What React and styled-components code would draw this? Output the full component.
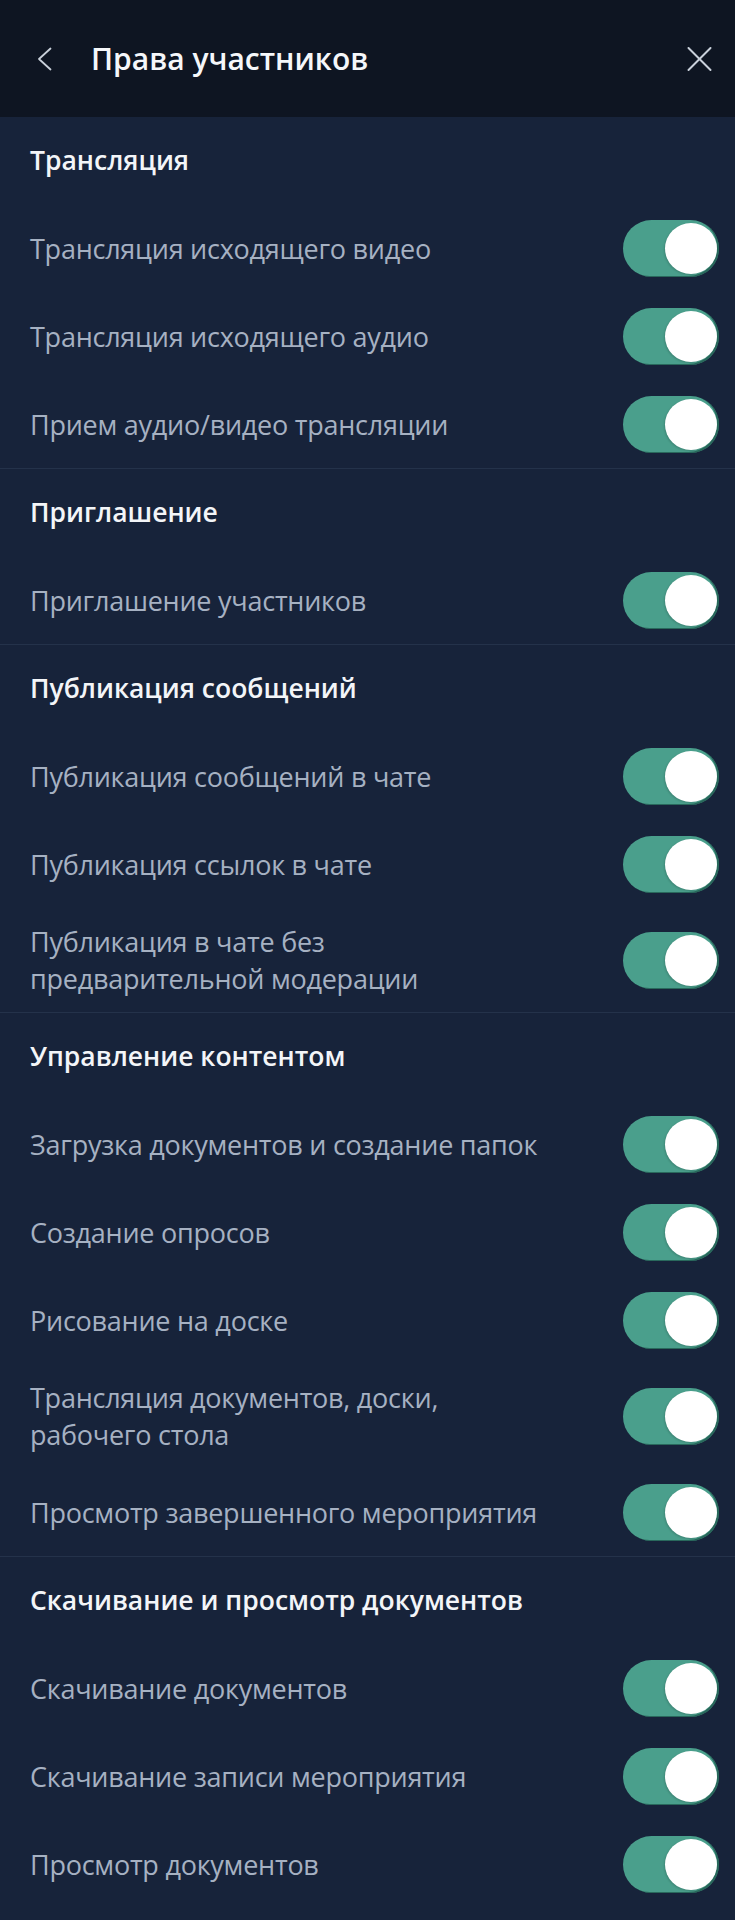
import React from "react";
import styled, { createGlobalStyle } from "styled-components";

const Global = createGlobalStyle`
  html, body { margin: 0; padding: 0; background: #17233a; }
  body { font-family: "Open Sans", "Noto Sans", sans-serif; -webkit-font-smoothing: antialiased; }
  * { box-sizing: border-box; }
`;

const Page = styled.div`
  width: 735px;
  min-height: 1920px;
  background: #17233a;
  display: flex;
  flex-direction: column;
`;

const Header = styled.header`
  height: 117px;
  background: #0e1522;
  display: flex;
  align-items: center;
  padding: 0 23px 0 37px;
`;

const IconButton = styled.button`
  background: none;
  border: none;
  padding: 0;
  display: flex;
  align-items: center;
  justify-content: center;
  cursor: pointer;
`;

const Title = styled.h1`
  flex: 1;
  margin: 0 0 0 39px;
  font-size: 30px;
  font-weight: 600;
  color: #f5f7fa;
  line-height: 1.2;
`;

const Section = styled.section`
  border-bottom: 1px solid ${(p) => (p.$last ? "transparent" : "#24324a")};
  display: flex;
  flex-direction: column;
`;

const SectionTitle = styled.h2`
  height: 87px;
  margin: 0;
  padding: 0 16px 2px 30px;
  display: flex;
  align-items: center;
  font-size: 26.5px;
  font-weight: 600;
  color: #f3f5f8;
`;

const Row = styled.div`
  min-height: ${(p) => (p.$tall ? 104 : 88)}px;
  padding: 14px 16px 14px 30px;
  display: flex;
  align-items: center;
  justify-content: space-between;
  gap: 20px;
`;

const Label = styled.span`
  max-width: 540px;
  font-size: 27px;
  line-height: 37px;
  letter-spacing: -0.25px;
  font-weight: 400;
  color: #a6b1c2;
`;

const Track = styled.span`
  position: relative;
  flex: none;
  width: 96px;
  height: 57px;
  border-radius: 29px;
  background: ${(p) => (p.$on ? "#4a9f8c" : "#3a465a")};
  box-shadow: inset -2px -1px 0 rgba(20, 70, 60, 0.6);
`;

const Knob = styled.span`
  position: absolute;
  top: 3px;
  ${(p) => (p.$on ? "right: 2px;" : "left: 2px;")}
  width: 52px;
  height: 51px;
  border-radius: 50%;
  background: #ffffff;
  box-shadow: -1px 1px 2px rgba(0, 0, 0, 0.15);
`;

const Toggle = ({ on = true }) => (
  <Track $on={on} role="switch" aria-checked={on}>
    <Knob $on={on} />
  </Track>
);

const sections = [
  {
    title: "Трансляция",
    items: [
      ["Трансляция исходящего видео"],
      ["Трансляция исходящего аудио"],
      ["Прием аудио/видео трансляции"],
    ],
  },
  { title: "Приглашение", items: [["Приглашение участников"]] },
  {
    title: "Публикация сообщений",
    items: [
      ["Публикация сообщений в чате"],
      ["Публикация ссылок в чате"],
      ["Публикация в чате без", "предварительной модерации"],
    ],
  },
  {
    title: "Управление контентом",
    items: [
      ["Загрузка документов и создание папок"],
      ["Создание опросов"],
      ["Рисование на доске"],
      ["Трансляция документов, доски,", "рабочего стола"],
      ["Просмотр завершенного мероприятия"],
    ],
  },
  {
    title: "Скачивание и просмотр документов",
    items: [
      ["Скачивание документов"],
      ["Скачивание записи мероприятия"],
      ["Просмотр документов"],
    ],
  },
];

export default function App() {
  return (
    <>
      <Global />
      <Page>
        <Header>
          <IconButton aria-label="Назад">
            <svg width="15" height="24" viewBox="0 0 15 24">
              <polyline points="13.5,1.5 2,12 13.5,22.5" fill="none" stroke="#c9d0da" strokeWidth="1.8" strokeLinecap="round" strokeLinejoin="round" />
            </svg>
          </IconButton>
          <Title>Права участников</Title>
          <IconButton aria-label="Закрыть">
            <svg width="25" height="24" viewBox="0 0 25 24">
              <line x1="1.5" y1="1" x2="23.5" y2="23" stroke="#c9d0da" strokeWidth="1.9" strokeLinecap="round" />
              <line x1="23.5" y1="1" x2="1.5" y2="23" stroke="#c9d0da" strokeWidth="1.9" strokeLinecap="round" />
            </svg>
          </IconButton>
        </Header>
        {sections.map((s, i) => (
          <Section key={s.title} $last={i === sections.length - 1}>
            <SectionTitle>{s.title}</SectionTitle>
            {s.items.map((lines) => (
              <Row key={lines.join(" ")} $tall={lines.length > 1}>
                <Label>
                  {lines.map((l, j) => (
                    <React.Fragment key={l}>
                      {j > 0 && <br />}
                      {l}
                    </React.Fragment>
                  ))}
                </Label>
                <Toggle on />
              </Row>
            ))}
          </Section>
        ))}
      </Page>
    </>
  );
}
